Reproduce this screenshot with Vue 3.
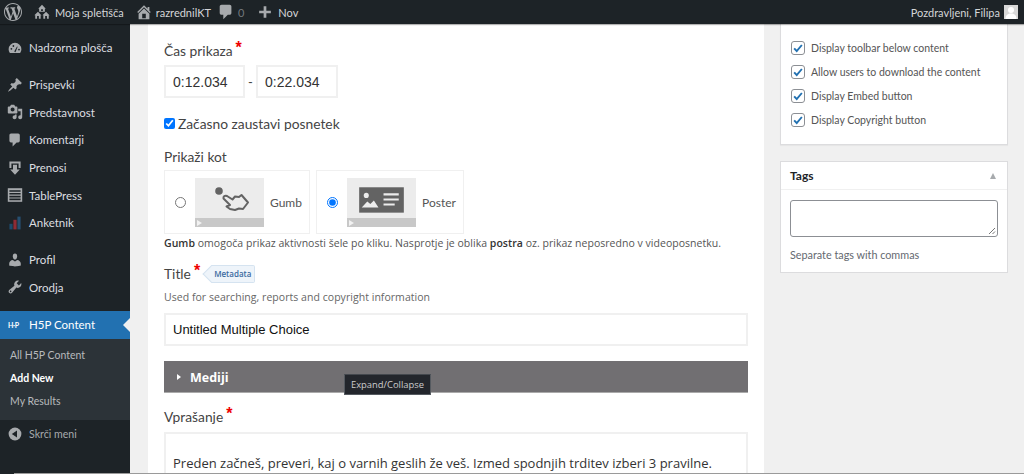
<script setup>
const menu1 = [
  { t: 'Prispevki', i: 'pin' },
  { t: 'Predstavnost', i: 'media' },
  { t: 'Komentarji', i: 'comment' },
  { t: 'Prenosi', i: 'dl' },
  { t: 'TablePress', i: 'table' },
  { t: 'Anketnik', i: 'chart' },
]
const checks = ['Display toolbar below content', 'Allow users to download the content', 'Display Embed button', 'Display Copyright button']
</script>

<template>
  <div class="page">
    <header class="topbar">
      <svg class="wp" viewBox="0 0 20 20" width="18" height="18"><path d="M20 10c0-5.510-4.490-10-10-10C4.480 0 0 4.490 0 10c0 5.520 4.480 10 10 10 5.510 0 10-4.480 10-10zM7.780 15.370L4.370 6.220c.55-.02 1.170-.08 1.170-.08.5-.06.44-1.130-.06-1.110 0 0-1.450.11-2.370.11-.18 0-.37 0-.58-.01C4.120 2.690 6.870 1.110 10 1.110c2.330 0 4.450.87 6.050 2.340-.68-.11-1.650.39-1.650 1.580 0 .74.45 1.360.9 2.100.35.61.55 1.360.55 2.460 0 1.490-1.400 5-1.400 5l-3.030-8.370c.54-.02.82-.17.82-.17.5-.05.44-1.250-.06-1.220 0 0-1.440.12-2.380.12-.87 0-2.330-.12-2.330-.12-.5-.03-.56 1.200-.06 1.220l.92.08 1.260 3.410zM17.410 10c.24-.64.74-1.870.43-4.250.7 1.290 1.050 2.710 1.050 4.250 0 3.290-1.730 6.240-4.400 7.780.97-2.590 1.940-5.200 2.920-7.780zM6.100 18.090C3.120 16.640 1.110 13.530 1.110 10c0-1.300.23-2.480.72-3.590C3.250 10.300 4.670 14.200 6.100 18.090zm4.030-6.630l2.580 6.980c-.86.29-1.740.45-2.710.45-.82 0-1.620-.11-2.370-.33.85-2.380 1.670-4.740 2.500-7.100z" fill="#a7aaad"/></svg>
      <span class="tb-item tb-sites">
        <svg viewBox="0 0 20 20"><path fill-rule="evenodd" d="M10 2 5.800 6.300l1 .1V9.600h6.400V6.400l1-.1zM9 7h2v2H9zM5.500 9.600 1.500 13.600l1 .1v3.900h6v-3.900l1 .1zM4.500 14.500h2v3h-2zM14.500 9.600l-4 4 1 .1v3.900h6v-3.900l1 .1zM13.500 14.500h2v3h-2z" fill="#a7aaad"/></svg>
        Moja spletišča
      </span>
      <span class="tb-item tb-home">
        <svg viewBox="0 0 20 20"><path d="M16 8.500l1.530 1.530-1.060 1.060L10 4.620l-6.470 6.470-1.060-1.060L10 2.500l4 4v-2h2v4zm-6-2.460l6 5.990V18H4v-5.970zM12 17v-5H8v5h4z" fill="#a7aaad"/></svg>
        razrednilKT
      </span>
      <span class="tb-item tb-com">
        <svg viewBox="0 0 20 20"><path d="M5 2h9c1.100 0 2 .9 2 2v7c0 1.100-.9 2-2 2h-2l-5 5v-5H5c-1.100 0-2-.9-2-2V4c0-1.100.9-2 2-2z" fill="#a7aaad"/></svg>
        <span class="dim">0</span>
      </span>
      <span class="tb-item tb-new">
        <svg viewBox="0 0 20 20"><path d="M8.500 3.500h3v5h5v3h-5v5h-3v-5h-5v-3h5z" fill="#a7aaad"/></svg>
        Nov
      </span>
      <span class="tb-user">Pozdravljeni, Filipa
        <span class="avatar"><svg viewBox="0 0 14 14" width="14" height="14"><rect width="14" height="14" fill="#d8d8d8"/><circle cx="7" cy="5" r="3" fill="#fff"/><path d="M1.500 14c0-4 2.500-5.500 5.500-5.500S12.500 10 12.500 14z" fill="#fff"/></svg></span>
      </span>
    </header>

    <div class="body">
      <aside class="side">
        <div class="mi">
          <svg viewBox="0 0 20 20"><path d="M10 3.500a8 8 0 0 0-8 8c0 1.800.6 3.400 1.600 4.800h12.800A8 8 0 0 0 18 11.500a8 8 0 0 0-8-8z" fill="#a7aaad"/><path d="M9 14.500 12.500 8l.8.4-2.700 6.800z" fill="#1d2327"/><circle cx="5.500" cy="11" r="1.100" fill="#1d2327"/><circle cx="8" cy="7.500" r="1.100" fill="#1d2327"/><circle cx="15" cy="12" r="1.100" fill="#1d2327"/></svg>
          <span>Nadzorna plošča</span>
        </div>
        <div class="group">
          <div v-for="m in menu1" :key="m.t" class="mi">
            <svg viewBox="0 0 20 20">
              <path v-if="m.i === 'pin'" d="M10.440 3.020l1.820-1.820 6.360 6.350-1.830 1.820c-1.050-.68-2.480-.57-3.410.36l-.75.75c-.92.93-1.040 2.350-.35 3.410l-1.830 1.820-2.410-2.410-2.800 2.790c-.42.42-3.380 2.710-3.800 2.290s1.860-3.390 2.280-3.810l2.790-2.790L4.100 9.360l1.830-1.820c1.050.69 2.480.57 3.400-.36l.75-.75c.93-.92 1.050-2.350.36-3.410z" fill="#a7aaad"/>
              <path v-else-if="m.i === 'media'" d="M13 11V4c0-.55-.45-1-1-1h-1.670L9 1H5L3.670 3H2c-.55 0-1 .45-1 1v7c0 .55.45 1 1 1h10c.55 0 1-.45 1-1zM7 4.500c1.380 0 2.500 1.120 2.500 2.500S8.380 9.500 7 9.500 4.500 8.380 4.500 7 5.620 4.500 7 4.500zM14 6h5v10.500c0 1.380-1.120 2.500-2.500 2.500S14 17.880 14 16.500s1.120-2.500 2.500-2.500c.17 0 .34.020.5.050V9h-3V6zm-4 8.050V13h2v3.500c0 1.380-1.120 2.500-2.500 2.500S7 17.880 7 16.500 8.120 14 9.500 14c.17 0 .34.020.5.050z" fill="#a7aaad"/>
              <path v-else-if="m.i === 'comment'" d="M5 2h9c1.100 0 2 .9 2 2v7c0 1.100-.9 2-2 2h-2l-5 5v-5H5c-1.100 0-2-.9-2-2V4c0-1.100.9-2 2-2z" fill="#a7aaad"/>
              <path v-else-if="m.i === 'dl'" d="M3 2h14v8h-2.500V4.500h-9V10H3zM7.500 6h5v6H16l-6 6.500L4 12h3.500z" fill="#a7aaad"/>
              <g v-else-if="m.i === 'table'"><rect x="1" y="1.500" width="18" height="17" fill="#a7aaad"/><path d="M3 4h14v2H3zM3 7.500h14v2H3zM3 11h14v2H3zM3 14.500h14v2H3z" fill="#1d2327"/></g>
              <g v-else><rect x="3" y="11" width="4" height="7" fill="#1d4a6b"/><rect x="8" y="6" width="4" height="12" fill="#8f2b35"/><rect x="13" y="2" width="4" height="16" fill="#264f70"/></g>
            </svg>
            <span>{{ m.t }}</span>
          </div>
        </div>
        <div class="group">
          <div class="mi">
            <svg viewBox="0 0 20 20"><path d="M10 9.250c-2.270 0-2.730-3.440-2.730-3.440C7 4.020 7.820 2 9.970 2c2.160 0 2.980 2.020 2.710 3.810 0 0-.41 3.440-2.680 3.440zm0 2.570L12.720 10c2.390 0 4.520 2.330 4.520 4.530v2.490s-3.650 1.130-7.240 1.130c-3.650 0-7.240-1.130-7.240-1.130v-2.490c0-2.250 1.940-4.530 4.430-4.530z" fill="#a7aaad"/></svg>
            <span>Profil</span>
          </div>
          <div class="mi">
            <svg viewBox="0 0 20 20"><path d="M16.680 9.770c-1.340 1.340-3.300 1.670-4.950.99l-5.410 6.520c-.99.99-2.590.99-3.580 0s-.99-2.590 0-3.570l6.520-5.420c-.68-1.650-.35-3.610.99-4.950 1.280-1.280 3.120-1.620 4.720-1.060l-2.890 2.890 2.820 2.820 2.860-2.860c.53 1.580.18 3.400-1.080 4.640zM3.810 16.210c.4.390 1.040.39 1.430 0 .4-.4.400-1.040 0-1.430-.39-.4-1.030-.4-1.430 0-.39.390-.39 1.030 0 1.430z" fill="#a7aaad"/></svg>
            <span>Orodja</span>
          </div>
        </div>
        <div class="h5p">
          <span class="h5p-logo">H·P</span>
          <span>H5P Content</span>
          <i class="notch"></i>
        </div>
        <div class="sub">
          <div>All H5P Content</div>
          <div class="cur">Add New</div>
          <div>My Results</div>
        </div>
        <div class="mi collapse">
          <svg viewBox="0 0 20 20"><circle cx="10" cy="10" r="8" fill="#a7aaad"/><path d="M12.500 5.500v9L6 10z" fill="#1d2327"/></svg>
          <span>Skrči meni</span>
        </div>
      </aside>

      <div class="content">
        <main class="panel">
          <div class="lab">Čas prikaza<b class="star">*</b></div>
          <div class="times">
            <input class="field time" value="0:12.034" readonly />
            <span class="dash-sep">-</span>
            <input class="field time" value="0:22.034" readonly />
          </div>
          <label class="pause"><input type="checkbox" checked />Začasno zaustavi posnetek</label>
          <div class="lab lab-show">Prikaži kot</div>
          <div class="opts">
            <label class="opt opt1">
              <input type="radio" name="o" />
              <span class="thumb">
                <svg class="art" viewBox="0 0 69 49" width="69" height="49">
                  <circle cx="24" cy="13" r="3.800" fill="#636363"/>
                  <path d="M28.500 20.500C28 18.500 30 17 32 18L37.500 21.500 40 18.500 44 19 46.500 17 53 24.500 48 31 44 30.500 40 32 35 31 31.500 28.500 35 27Z" fill="none" stroke="#636363" stroke-width="2" stroke-linejoin="round"/>
                </svg>
                <span class="bar"><i></i></span>
              </span>
              <span class="opt-t">Gumb</span>
            </label>
            <label class="opt opt2">
              <input type="radio" name="o" checked />
              <span class="thumb">
                <svg class="art" viewBox="0 0 68 48" width="69" height="49">
                  <rect x="12" y="9" width="44" height="25" fill="#636363"/>
                  <circle cx="19" cy="17" r="2.500" fill="#ececec"/>
                  <path d="M14.500 29l5.500-6 3 2.500 3.500-3.500 4.500 7z" fill="#ececec"/>
                  <path d="M36 15h15v2H36zM36 20h15v2H36zM36 25h11v2H36z" fill="#ececec"/>
                </svg>
                <span class="bar"><i></i></span>
              </span>
              <span class="opt-t">Poster</span>
            </label>
          </div>
          <p class="help"><b>Gumb</b> omogoča prikaz aktivnosti šele po kliku. Nasprotje je oblika <b>postra</b> oz. prikaz neposredno v videoposnetku.</p>
          <div class="title-row">
            <span class="lab">Title<b class="star">*</b></span>
            <span class="meta"><span>Metadata</span></span>
          </div>
          <p class="desc">Used for searching, reports and copyright information</p>
          <input class="field wide" value="Untitled Multiple Choice" readonly />
          <div class="mediji-wrap">
            <div class="mediji"><i class="tri"></i>Mediji</div>
            <div class="tip">Expand/Collapse</div>
          </div>
          <div class="lab lab-q">Vprašanje<b class="star">*</b></div>
          <div class="q">Preden začneš, preveri, kaj o varnih geslih že veš. Izmed spodnjih trditev izberi 3 pravilne.</div>
        </main>

        <aside class="right">
          <section class="box box-checks">
            <label v-for="c in checks" :key="c" class="chk">
              <span class="cb"><svg viewBox="0 0 14 14"><path d="M2.500 7.500 5.500 10.500 11.500 3.500" fill="none" stroke="#2271b1" stroke-width="2.200"/></svg></span>
              {{ c }}
            </label>
          </section>
          <section class="box box-tags">
            <div class="tags-h"><span>Tags</span><i class="up"></i></div>
            <div class="tags-b">
              <div class="ta"><svg viewBox="0 0 8 8" width="8" height="8"><path d="M1 7 7 1M4.500 7 7 4.500" stroke="#777" fill="none"/></svg></div>
              <p>Separate tags with commas</p>
            </div>
          </section>
        </aside>
      </div>
    </div>
    <div class="edge"></div>
  </div>
</template>

<style>
html, body { margin: 0; overflow: hidden; background: #f0f0f0; }
</style>

<style scoped>
.page { position: relative; width: 1024px; height: 474px; overflow: hidden; font-family: Lato, Roboto, sans-serif; background: #f0f0f0; }
.edge { position: absolute; left: 14px; right: 0; bottom: 0; height: 1px; background: #9a9a9a; }
.topbar { height: 24px; background: #1d2327; color: #d4d5d7; font-size: 11px; display: flex; align-items: center; padding-left: 4px; box-sizing: border-box; position: relative; z-index: 2; box-shadow: 0 1px 1px rgba(0,0,0,.3); }
.wp { flex: none; }
.tb-item { display: flex; align-items: center; }
.tb-item svg { width: 18px; height: 18px; flex: none; }
.tb-sites { margin-left: 11px; gap: 4px; }
.tb-home { margin-left: 11px; gap: 3px; }
.tb-com { margin-left: 6px; gap: 3px; }
.tb-new { margin-left: 12px; gap: 4px; }
.dim { color: #72777c; }
.tb-user { margin-left: auto; margin-right: 6px; display: flex; align-items: center; gap: 4px; }
.avatar { display: block; width: 14px; height: 14px; }
.avatar svg { display: block; }

.body { display: flex; height: 450px; }
.side { width: 130px; flex: none; background: #1d2327; font-size: 11.500px; padding-top: 10px; box-sizing: border-box; }
.mi { height: 27.700px; display: flex; align-items: center; gap: 6px; padding-left: 7px; color: #dcdee0; white-space: nowrap; }
.mi svg { flex: none; width: 16px; height: 16px; }
.group { margin-top: 9px; }
.h5p { margin-top: 9.800px; height: 28px; background: #2271b1; color: #fff; display: flex; align-items: center; padding-left: 8px; position: relative; font-size: 11.500px; }
.h5p-logo { width: 21px; font-size: 7px; font-weight: 700; letter-spacing: -.3px; }
.notch { position: absolute; right: 0; top: 7px; border: 7px solid transparent; border-right-color: #f0f0f0; border-left-width: 0; }
.sub { background: #2c3338; padding: 5px 10px 7px; font-size: 10.500px; color: #b8babd; line-height: 23px; }
.sub .cur { color: #fff; font-weight: 700; }
.collapse { margin-top: 0; height: 28px; color: #a7aaad; font-size: 10.600px; }

.content { flex: 1; display: flex; padding-left: 18px; min-width: 0; }
.panel { width: 616px; flex: none; background: #fff; box-sizing: border-box; padding: 17px 16px 0; color: #444; height: 470px; }
.lab { font-size: 13.800px; line-height: 20px; color: #444; }
.star { color: #e00; font: 700 16px/10px "Liberation Sans", sans-serif; margin-left: 3px; position: relative; top: -3px; }
.times { display: flex; align-items: center; margin-top: 4px; }
.field { box-sizing: border-box; border: 2px solid #f0f0f0; background: #fff; height: 33px; padding: 0 7px; font: 14px "Liberation Sans", Arial, sans-serif; color: #222; outline: 0; display: block; }
.time { width: 81px; color: #333; }
.time:last-child { width: 82px; }
.dash-sep { width: 11px; text-align: center; font-size: 13px; }
.pause { display: flex; align-items: center; font-size: 13.800px; margin-top: 15px; height: 20px; color: #444; }
.pause input { margin: 0 3px 0 0; width: 11px; height: 11px; accent-color: #0075ff; }
.lab-show { margin-top: 14px; }
.opts { display: flex; gap: 6px; margin-top: 3px; }
.opt { box-sizing: border-box; height: 64px; border: 1px solid #f0f0f0; display: flex; align-items: center; font-size: 12px; color: #555; }
.opt1 { width: 146px; }
.opt2 { width: 148px; }
.opt input { width: 11px; height: 11px; margin: 0 9px 0 10px; accent-color: #0075ff; }
.thumb { position: relative; width: 69px; height: 49px; background: #ececec; display: block; flex: none; }
.art { display: block; }
.bar { position: absolute; left: 0; right: 0; bottom: 0; height: 9px; background: #c8c8c8; }
.bar i { position: absolute; left: 2px; top: 2px; border: 3px solid transparent; border-left: 5px solid #f2f2f2; border-right: 0; }
.opt-t { margin-left: 6px; }
.help { margin: 2px 0 0; font: 10.500px/14px "Open Sans", sans-serif; color: #555; white-space: nowrap; letter-spacing: .03px; }
.help b { font-weight: 600; color: #333; }
.title-row { margin-top: 14px; display: flex; align-items: center; height: 20px; }
.meta { margin-left: 11px; height: 18px; box-sizing: border-box; font: 600 8px/16px "Open Sans", sans-serif; color: #3a6aa0; background: #eef4fa; border: 1px solid #d5e3f0; border-left: 0; border-radius: 0 2px 2px 0; padding: 0 3px 0 3px; position: relative; }
.meta span { position: relative; }
.meta::before { content: ""; position: absolute; left: -6px; top: 2px; width: 11px; height: 11px; background: #eef4fa; border-left: 1px solid #d5e3f0; border-bottom: 1px solid #d5e3f0; transform: rotate(45deg); }
.desc { margin: 6px 0 0; font: 10.500px/14px "Open Sans", sans-serif; color: #666; letter-spacing: .04px; }
.wide { width: 584px; margin-top: 9px; color: #111; font-size: 13px; }
.mediji-wrap { position: relative; margin-top: 15px; width: 584px; }
.mediji { height: 32px; background: #716f72; border-bottom: 1px solid #aaa; padding: 1px 0 0 13px; box-sizing: border-box; color: #fff; font: 700 12.500px "Open Sans", sans-serif; display: flex; align-items: center; }
.tri { border: 3.500px solid transparent; border-left: 4px solid #fff; border-right: 0; margin-right: 9px; }
.tip { position: absolute; left: 180px; top: 13px; height: 19px; padding: 0 6px; background: #23262c; color: #ccc; font: 9.400px/19px "Open Sans", sans-serif; border: 1px solid #555a60; border-top-color: #44484e; }
.lab-q { margin-top: 14px; }
.q { box-sizing: border-box; width: 584px; height: 60px; margin-top: 5px; border: 2px solid #f0f0f0; padding: 20px 7px 0; font: 13px "Open Sans", sans-serif; color: #333; white-space: nowrap; }

.right { margin-left: 16px; width: 228px; flex: none; }
.box { background: #fff; border: 1px solid #dcdcde; border-top: 0; box-sizing: border-box; color: #555; }
.box-checks { height: 121px; padding-top: 12px; font-size: 10.500px; box-shadow: 0 1px 1px rgba(0,0,0,.04); }
.chk { display: flex; align-items: center; height: 24px; padding-left: 10px; gap: 6px; white-space: nowrap; }
.cb { width: 12px; height: 12px; border: 1px solid #8c8f94; border-radius: 3px; background: #fff; display: block; flex: none; }
.cb svg { display: block; width: 12px; height: 12px; }
.box-tags { margin-top: 16px; border-top: 1px solid #dcdcde; height: 112px; }
.tags-h { height: 28px; border-bottom: 1px solid #f0f0f0; display: flex; align-items: center; justify-content: space-between; padding: 0 11px 0 9px; font-size: 12px; font-weight: 700; color: #1d2327; box-sizing: border-box; }
.up { border: 4px solid transparent; border-bottom: 6px solid #a7aaad; border-top: 0; border-left-width: 3.500px; border-right-width: 3.500px; }
.tags-b { padding: 10px 9px 0; }
.ta { width: 208px; height: 37px; border: 1px solid #8c8f94; border-radius: 3px; box-sizing: border-box; position: relative; }
.ta svg { position: absolute; right: 1px; bottom: 1px; }
.tags-b p { margin: 10px 0 0; font-size: 10.800px; color: #646970; line-height: 15px; }
</style>
